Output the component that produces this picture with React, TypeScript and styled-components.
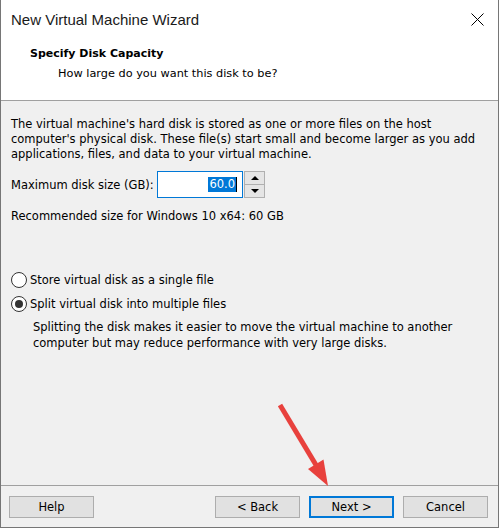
import styled, { createGlobalStyle } from 'styled-components'

const GlobalStyle = createGlobalStyle`
  html, body {
    margin: 0;
    padding: 0;
    background: #ffffff;
  }
  * {
    box-sizing: border-box;
  }
`

const Window = styled.div`
  position: relative;
  width: 499px;
  height: 528px;
  display: flex;
  flex-direction: column;
  background: #f0f0f0;
  border: 1px solid #767676;
  border-top: none;
  font-family: 'DejaVu Sans', Verdana, sans-serif;
  font-size: 11.5px;
  color: #000;
`

const TitleBar = styled.div`
  height: 38px;
  display: flex;
  align-items: center;
  justify-content: space-between;
  padding: 0 14px 0 10px;
  background: #fff;
`

const TitleText = styled.div`
  font-family: 'Liberation Sans', Arial, sans-serif;
  font-size: 15px;
  color: #1a1a1a;
`

const CloseButton = styled.div`
  width: 14px;
  height: 14px;
  display: flex;
  align-items: center;
  justify-content: center;
`

const Header = styled.div`
  height: 63px;
  background: #fff;
  border-bottom: 1px solid #a0a0a0;
  padding: 8px 0 0 29px;
`

const HeaderTitle = styled.div`
  font-weight: bold;
  font-size: 11px;
  line-height: 16px;
`

const HeaderSub = styled.div`
  margin: 4px 0 0 28px;
  font-size: 11.3px;
  line-height: 16px;
`

const Body = styled.div`
  flex: 1;
  display: flex;
  flex-direction: column;
  padding: 16px 10px 0 10px;
`

const Paragraph = styled.p<{ indent?: number }>`
  margin: 0;
  margin-left: ${(p) => p.indent || 0}px;
  line-height: 15px;
  white-space: nowrap;
`

const SizeRow = styled.div`
  display: flex;
  align-items: center;
  margin-top: 9px;
  height: 27px;
`

const SizeLabel = styled.span`
  width: 146px;
  flex-shrink: 0;
  white-space: nowrap;
`

const NumberInput = styled.div`
  width: 86px;
  height: 27px;
  border: 1px solid #0078d7;
  background: #fff;
  display: flex;
  align-items: center;
  justify-content: flex-end;
  padding-right: 5px;
`

const Selected = styled.span`
  background: #0078d7;
  color: #fff;
  line-height: 15px;
  padding: 0 1px;
  border-right: 1px solid #000;
`

const Spinner = styled.div`
  width: 21px;
  height: 27px;
  margin-left: 1px;
  border: 1px solid #b0b0b0;
  display: flex;
  flex-direction: column;
  background: #f0f0f0;
`

const SpinHalf = styled.div<{ down?: boolean }>`
  flex: 1;
  display: flex;
  align-items: center;
  justify-content: center;
  border-top: ${(p) => (p.down ? '1px solid #b0b0b0' : 'none')};
  background: #e5e5e5;
`

const Arrow = styled.span<{ down?: boolean }>`
  width: 0;
  height: 0;
  border-left: 4px solid transparent;
  border-right: 4px solid transparent;
  ${(p) =>
    p.down ? 'border-top: 4px solid #000;' : 'border-bottom: 4px solid #000;'}
`

const Recommended = styled.div`
  margin-top: 11px;
  line-height: 15px;
`

const RadioGroup = styled.div`
  margin-top: 48px;
  display: flex;
  flex-direction: column;
  gap: 8px;
`

const RadioRow = styled.label`
  display: flex;
  align-items: center;
  height: 16px;
  gap: 3px;
`

const RadioCircle = styled.span<{ checked?: boolean }>`
  width: 16px;
  height: 16px;
  border-radius: 50%;
  border: 1px solid #333;
  background: #fff;
  display: flex;
  align-items: center;
  justify-content: center;
  &::after {
    content: '';
    width: 8px;
    height: 8px;
    border-radius: 50%;
    background: ${(p) => (p.checked ? '#333' : 'transparent')};
  }
`

const Description = styled(Paragraph)`
  margin-top: 7px;
  line-height: 16px;
`

const Footer = styled.div`
  height: 42px;
  border-top: 1px solid #a0a0a0;
  display: flex;
  align-items: flex-start;
  padding: 10px 10px 0 8px;
`

const Spacer = styled.div`
  flex: 1;
`

const Button = styled.button<{ primary?: boolean }>`
  width: 85px;
  height: 22px;
  margin-left: ${(p) => (p.primary ? '9px' : '0')};
  margin-right: ${(p) => (p.primary ? '9px' : '0')};
  font-family: 'DejaVu Sans', Verdana, sans-serif;
  font-size: 11.5px;
  color: #000;
  background: #e1e1e1;
  border: ${(p) => (p.primary ? '2px solid #0078d7' : '1px solid #adadad')};
  padding: 0;
`

const Overlay = styled.svg`
  position: absolute;
  left: 0;
  top: 0;
  pointer-events: none;
`

export default function App() {
  return (
    <>
      <GlobalStyle />
      <Window>
        <TitleBar>
          <TitleText>New Virtual Machine Wizard</TitleText>
          <CloseButton>
            <svg width="13" height="13" viewBox="0 0 13 13">
              <path d="M0.5 0.5 L12.5 12.5 M12.5 0.5 L0.5 12.5" stroke="#000" strokeWidth="1" />
            </svg>
          </CloseButton>
        </TitleBar>
        <Header>
          <HeaderTitle>Specify Disk Capacity</HeaderTitle>
          <HeaderSub>How large do you want this disk to be?</HeaderSub>
        </Header>
        <Body>
          <Paragraph>
            The virtual machine's hard disk is stored as one or more files on the host
            <br />
            computer's physical disk. These file(s) start small and become larger as you add
            <br />
            applications, files, and data to your virtual machine.
          </Paragraph>
          <SizeRow>
            <SizeLabel>Maximum disk size (GB):</SizeLabel>
            <NumberInput>
              <Selected>60.0</Selected>
            </NumberInput>
            <Spinner>
              <SpinHalf>
                <Arrow />
              </SpinHalf>
              <SpinHalf down>
                <Arrow down />
              </SpinHalf>
            </Spinner>
          </SizeRow>
          <Recommended>Recommended size for Windows 10 x64: 60 GB</Recommended>
          <RadioGroup>
            <RadioRow>
              <RadioCircle />
              Store virtual disk as a single file
            </RadioRow>
            <RadioRow>
              <RadioCircle checked />
              Split virtual disk into multiple files
            </RadioRow>
          </RadioGroup>
          <Description indent={22}>
            Splitting the disk makes it easier to move the virtual machine to another
            <br />
            computer but may reduce performance with very large disks.
          </Description>
        </Body>
        <Footer>
          <Button>Help</Button>
          <Spacer />
          <Button>&lt; Back</Button>
          <Button primary>Next &gt;</Button>
          <Button>Cancel</Button>
        </Footer>
        <Overlay width="499" height="528">
          <line x1="279" y1="405" x2="315" y2="465" stroke="#e8413d" strokeWidth="5" />
          <polygon points="327,486 307,469 322.5,459.5" fill="#e8413d" />
        </Overlay>
      </Window>
    </>
  )
}
